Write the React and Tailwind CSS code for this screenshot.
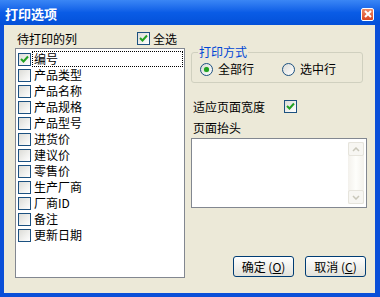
import React from "react";

const FONT = { fontFamily: '"Noto Sans CJK SC", "Liberation Sans", sans-serif' };

function Check({ checked }) {
  return (
    <span className="relative inline-block w-[13px] h-[13px] shrink-0 border border-[#1C5180] bg-gradient-to-br from-[#DCDCD7] to-[#FFFFFF]">
      {checked && (
        <svg className="absolute left-[1px] top-[1px]" width="9" height="9" viewBox="0 0 9 9">
          <path d="M1 4 L3.5 6.5 L8 1.5" stroke="#21A121" strokeWidth="2" fill="none" />
        </svg>
      )}
    </span>
  );
}

function Radio({ checked }) {
  return (
    <span className="relative inline-flex items-center justify-center w-[13px] h-[13px] shrink-0 rounded-full border border-[#1C5180] bg-gradient-to-br from-[#DCDCD7] to-[#FFFFFF]">
      {checked && <span className="w-[5px] h-[5px] rounded-full bg-[#21A121] shadow-[0_0_1px_#5fd35f]" />}
    </span>
  );
}

const items = [
  "编号",
  "产品类型",
  "产品名称",
  "产品规格",
  "产品型号",
  "进货价",
  "建议价",
  "零售价",
  "生产厂商",
  "厂商ID",
  "备注",
  "更新日期",
];

function Button({ children }) {
  return (
    <button className="w-[61px] h-[21px] rounded-[3px] border border-[#003C74] bg-gradient-to-b from-[#FFFFFF] to-[#E3E2DA] text-[12px] leading-[14px] text-black flex items-center justify-center">
      {children}
    </button>
  );
}

export default function App() {
  return (
    <div className="w-[380px] h-[297px] bg-[#0A4FD8] flex flex-col text-black" style={FONT}>
      {/* title bar */}
      <div className="h-[25px] shrink-0 flex items-center justify-between bg-gradient-to-b from-[#3A86F5] via-[#0A5CE6] to-[#0450D8] pl-[5px] pr-[6px]">
        <span className="text-white font-bold text-[13px] leading-[15px] mt-[1px]">打印选项</span>
        <span className="w-[13px] h-[13px] rounded-[2px] border border-white bg-gradient-to-b from-[#EE8A66] to-[#D9431E] flex items-center justify-center mt-[3px]">
          <svg width="8" height="8" viewBox="0 0 8 8">
            <path d="M1 1 L7 7 M7 1 L1 7" stroke="white" strokeWidth="2" />
          </svg>
        </span>
      </div>
      {/* body */}
      <div className="flex-1 flex ml-[4px] mr-[5px] mb-[4px] bg-[#ECE9D8]">
        {/* left column */}
        <div className="w-[170px] ml-[11px] pt-[6px] flex flex-col">
          <div className="h-[15px] flex items-center justify-between pl-[2px] pr-[8px]">
            <span className="text-[12px] leading-[14px]">待打印的列</span>
            <span className="flex items-center gap-[3px]">
              <Check checked />
              <span className="text-[12px] leading-[14px]">全选</span>
            </span>
          </div>
          <div className="mt-[2px] h-[230px] bg-white border border-[#828790] pt-[2px] pl-[2px] pr-[1px] flex flex-col">
            {items.map((t, i) => (
              <div key={t} className="h-[16px] flex items-center">
                <Check checked={i === 0} />
                <span
                  className={
                    "ml-[1px] flex-1 h-[16px] flex items-center pl-[1px] text-[12px] leading-[14px] " +
                    (i === 0 ? "border border-dotted border-black" : "border border-transparent")
                  }
                >
                  {t}
                </span>
              </div>
            ))}
          </div>
        </div>
        {/* right column */}
        <div className="w-[176px] ml-[6px] flex flex-col">
          <fieldset className="mt-[21px] w-[172px] h-[37px] border border-[#D0D0BF] rounded-[3px] px-[8px]">
            <legend className="ml-[-2px] px-[1px] text-[12px] leading-[12px] text-[#0046D5]">打印方式</legend>
            <div className="flex items-center mt-[4px]">
              <span className="flex items-center gap-[5px] w-[82px]">
                <Radio checked />
                <span className="text-[12px] leading-[14px]">全部行</span>
              </span>
              <span className="flex items-center gap-[5px]">
                <Radio />
                <span className="text-[12px] leading-[14px]">选中行</span>
              </span>
            </div>
          </fieldset>
          <div className="mt-[17px] h-[13px] flex items-center pl-[2px]">
            <span className="text-[12px] leading-[14px] w-[91px]">适应页面宽度</span>
            <Check checked />
          </div>
          <div className="mt-[8px] h-[14px] flex items-center pl-[2px]">
            <span className="text-[12px] leading-[14px]">页面抬头</span>
          </div>
          <div className="mt-[3px] h-[70px] bg-white border border-[#828790] flex justify-end pr-[2px] pt-[3px] pb-[3px]">
            <div className="w-[16px] flex flex-col justify-between bg-gradient-to-r from-[#F3F1EC] via-[#FEFEFB] to-[#F3F1EC]">
              <span className="h-[14px] rounded-[2px] border border-[#E6E4DC] bg-[#F7F6F2] flex items-center justify-center">
                <svg width="8" height="5" viewBox="0 0 8 5">
                  <path d="M1 4 L4 1 L7 4" stroke="#C9C7BA" strokeWidth="1.5" fill="none" />
                </svg>
              </span>
              <span className="h-[14px] rounded-[2px] border border-[#E6E4DC] bg-[#F7F6F2] flex items-center justify-center">
                <svg width="8" height="5" viewBox="0 0 8 5">
                  <path d="M1 1 L4 4 L7 1" stroke="#C9C7BA" strokeWidth="1.5" fill="none" />
                </svg>
              </span>
            </div>
          </div>
          <div className="mt-[48px] flex justify-end gap-[11px] pr-[1px]">
            <Button>确定 (<span className="underline">O</span>)</Button>
            <Button>取消 (<span className="underline">C</span>)</Button>
          </div>
        </div>
      </div>
    </div>
  );
}
